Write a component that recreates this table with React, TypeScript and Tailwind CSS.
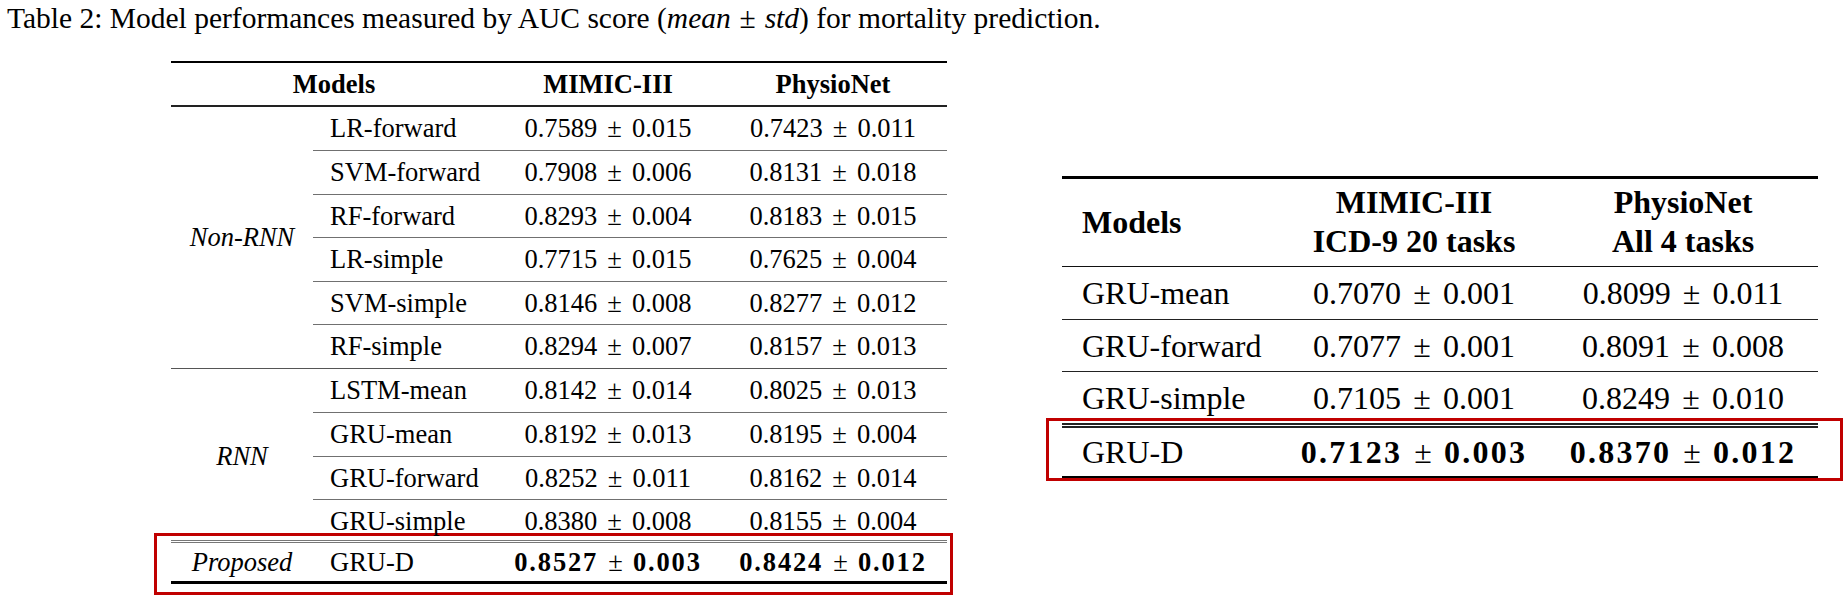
import React from "react";

const nonRnn = [
  { name: "LR-forward", mimic: "0.7589±0.015", physio: "0.7423±0.011" },
  { name: "SVM-forward", mimic: "0.7908±0.006", physio: "0.8131±0.018" },
  { name: "RF-forward", mimic: "0.8293±0.004", physio: "0.8183±0.015" },
  { name: "LR-simple", mimic: "0.7715±0.015", physio: "0.7625±0.004" },
  { name: "SVM-simple", mimic: "0.8146±0.008", physio: "0.8277±0.012" },
  { name: "RF-simple", mimic: "0.8294±0.007", physio: "0.8157±0.013" },
];

const rnn = [
  { name: "LSTM-mean", mimic: "0.8142±0.014", physio: "0.8025±0.013" },
  { name: "GRU-mean", mimic: "0.8192±0.013", physio: "0.8195±0.004" },
  { name: "GRU-forward", mimic: "0.8252±0.011", physio: "0.8162±0.014" },
  { name: "GRU-simple", mimic: "0.8380±0.008", physio: "0.8155±0.004" },
];

const multiTask = [
  { name: "GRU-mean", mimic: "0.7070±0.001", physio: "0.8099±0.011" },
  { name: "GRU-forward", mimic: "0.7077±0.001", physio: "0.8091±0.008" },
  { name: "GRU-simple", mimic: "0.7105±0.001", physio: "0.8249±0.010" },
];

// number ± number, spaced like a LaTeX binary operator
function Val({ v, bold }: { v: string; bold?: boolean }) {
  const [a, b] = v.split("±");
  return (
    <span className={bold ? "font-bold tracking-[0.07em]" : ""}>
      {a}
      <span className="mx-[0.38em] font-normal tracking-normal">±</span>
      {b}
    </span>
  );
}

type Row = { name: string; mimic: string; physio: string };

function Group({ label, rows }: { label: string; rows: Row[] }) {
  return (
    <div className="flex">
      <div className="flex w-[142px] items-center justify-center italic">{label}</div>
      <div className="flex-1">
        {rows.map((r, i) => (
          <div
            key={r.name}
            className={
              i > 0
                ? "flex h-[43.5px] items-center border-t border-[#707070]"
                : "flex h-[43.5px] items-center"
            }
          >
            <div className="w-[184px] pl-[17px]">{r.name}</div>
            <div className="w-[222px] text-center">
              <Val v={r.mimic} />
            </div>
            <div className="w-[228px] text-center">
              <Val v={r.physio} />
            </div>
          </div>
        ))}
      </div>
    </div>
  );
}

function MortalityTable() {
  return (
    <div className="ml-[171px] mt-[26.5px] w-[776px] text-[26.5px] leading-none">
      <div className="h-[2.5px] bg-black" />
      <div className="flex h-[42px] items-center font-bold">
        <div className="w-[326px] text-center">Models</div>
        <div className="w-[222px] text-center">MIMIC-III</div>
        <div className="w-[228px] text-center">PhysioNet</div>
      </div>
      <div className="h-[1.5px] bg-[#222]" />
      <Group label="Non-RNN" rows={nonRnn} />
      <div className="h-[1.3px] bg-[#555]" />
      <Group label="RNN" rows={rnn} />

      {/* highlighted proposed row */}
      <div className="-ml-[17px] -mr-[6px] -mt-[10px] border-[3px] border-[#c00000] pb-[8px] pl-[14px] pr-[3px] pt-[4px]">
        <div className="h-px bg-[#777]" />
        <div className="h-px" />
        <div className="h-px bg-[#777]" />
        <div className="flex h-[38.5px] items-center">
          <div className="w-[142px] text-center italic">Proposed</div>
          <div className="w-[184px] pl-[17px]">GRU-D</div>
          <div className="w-[222px] text-center">
            <Val v="0.8527±0.003" bold />
          </div>
          <div className="w-[228px] text-center">
            <Val v="0.8424±0.012" bold />
          </div>
        </div>
        <div className="h-[2.5px] bg-black" />
      </div>
    </div>
  );
}

function MultiTaskTable() {
  return (
    <div className="ml-[115px] mt-[142px] w-[756px] text-[32px] leading-none">
      <div className="h-[2.5px] bg-black" />
      <div className="flex h-[87px] items-center font-bold">
        <div className="w-[218px] pl-[20px]">Models</div>
        <div className="w-[268px] text-center leading-[39px]">
          MIMIC-III
          <br />
          ICD-9 20 tasks
        </div>
        <div className="w-[270px] text-center leading-[39px]">
          PhysioNet
          <br />
          All 4 tasks
        </div>
      </div>
      <div className="h-[1.5px] bg-[#111]" />
      {multiTask.map((r, i) => (
        <div
          key={r.name}
          className={
            i > 0
              ? "flex h-[52px] items-center border-t-[1.5px] border-[#222]"
              : "flex h-[52px] items-center"
          }
        >
          <div className="w-[218px] pl-[20px]">{r.name}</div>
          <div className="w-[268px] text-center">
            <Val v={r.mimic} />
          </div>
          <div className="w-[270px] text-center">
            <Val v={r.physio} />
          </div>
        </div>
      ))}

      <div className="-ml-[16px] -mr-[25px] -mt-[5px] border-[3px] border-[#c00000] pl-[13px] pr-[22px] pt-[2px]">
        <div className="h-[1.5px] bg-[#222]" />
        <div className="h-[1.5px]" />
        <div className="h-[1.5px] bg-[#222]" />
        <div className="flex h-[48px] items-center">
          <div className="w-[218px] pl-[20px]">GRU-D</div>
          <div className="w-[268px] text-center">
            <Val v="0.7123±0.003" bold />
          </div>
          <div className="w-[270px] text-center">
            <Val v="0.8370±0.012" bold />
          </div>
        </div>
        <div className="h-[2.5px] bg-black" />
      </div>
    </div>
  );
}

export default function App() {
  return (
    <div className="h-[608px] w-[1845px] overflow-hidden bg-white font-['Liberation_Serif','Times_New_Roman',serif] text-black">
      <p className="pl-[7px] pt-[2px] text-[29.5px] leading-[32px]">
        Table 2: Model performances measured by AUC score (<i>mean</i>
        <span className="mx-[0.3em]">±</span>
        <i>std</i>) for mortality prediction.
      </p>
      <div className="flex items-start">
        <MortalityTable />
        <MultiTaskTable />
      </div>
    </div>
  );
}
